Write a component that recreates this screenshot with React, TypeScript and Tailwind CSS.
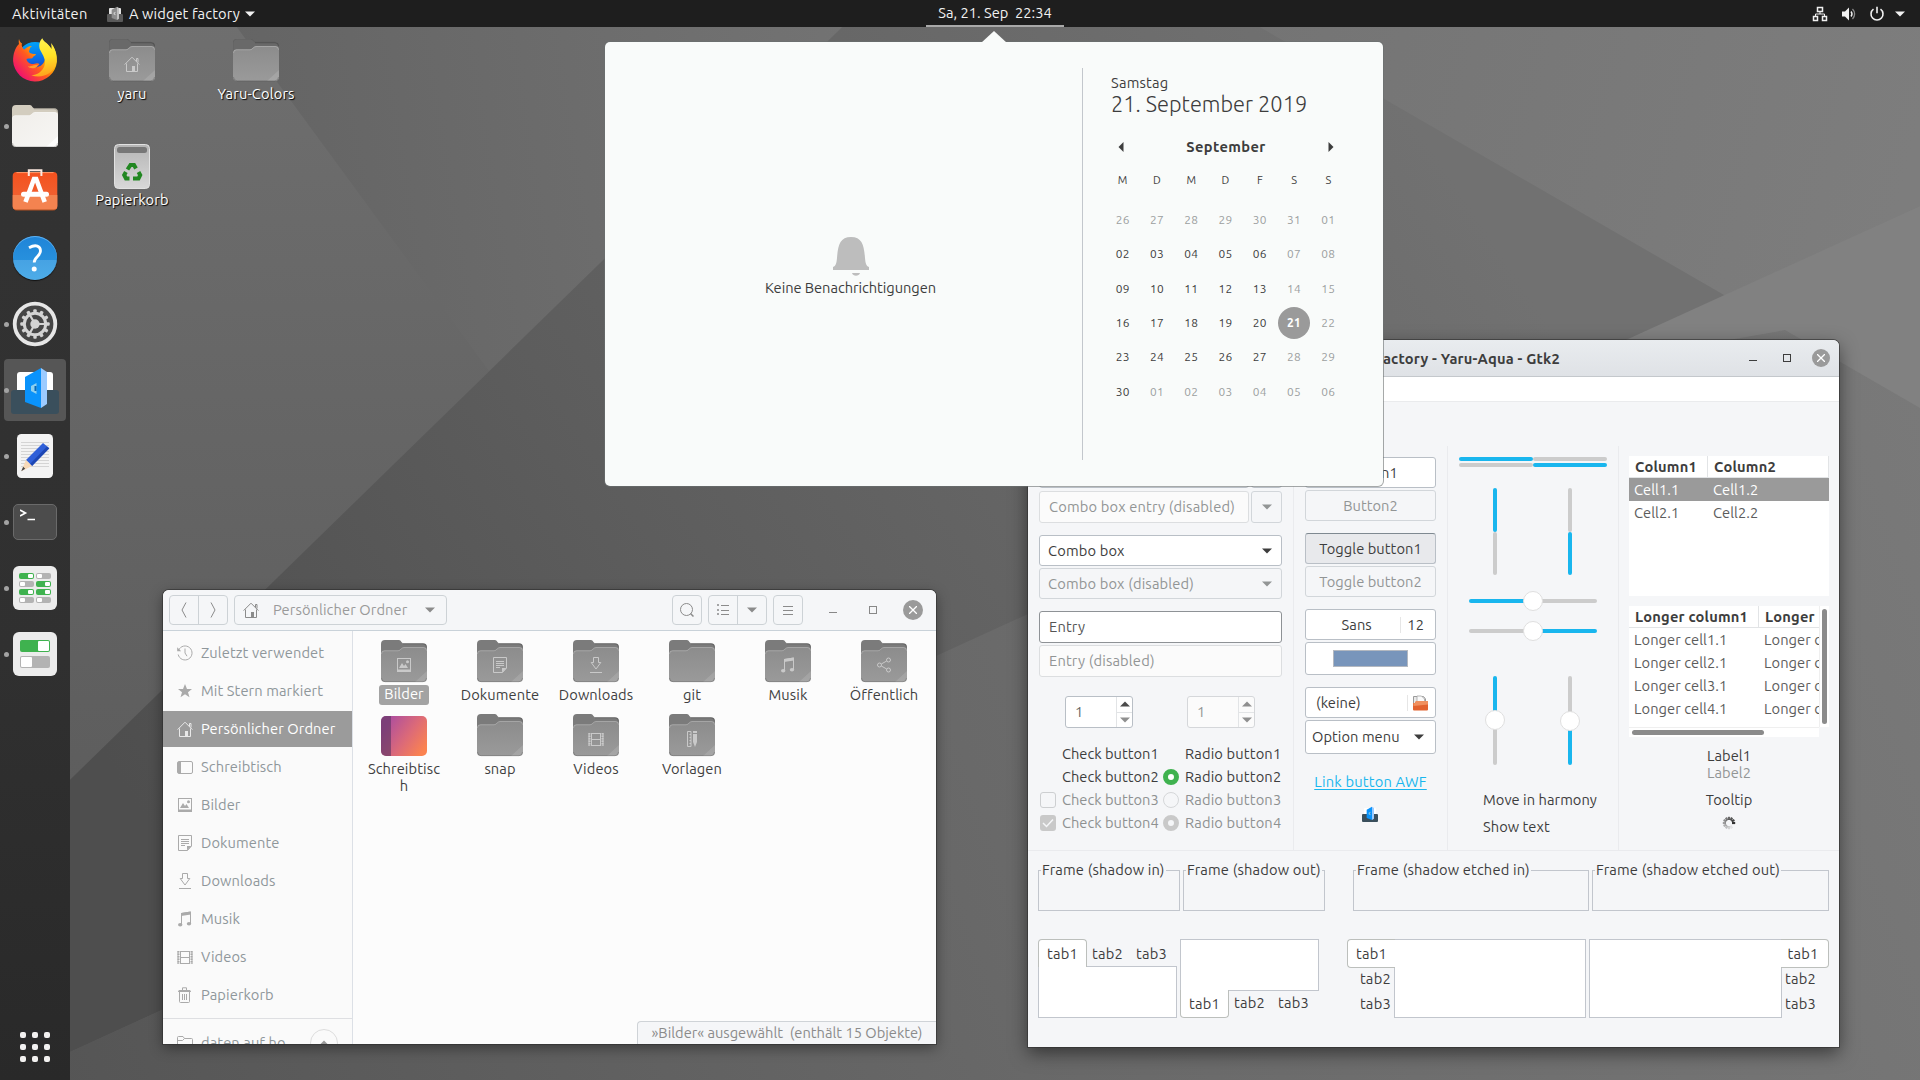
import React from "react";

type Kids = { children?: React.ReactNode };

/* ---------- wallpaper ---------- */

function Wallpaper() {
  return (
    <svg className="absolute inset-0" width="1920" height="1080" viewBox="0 0 1920 1080">
      <defs>
        <linearGradient id="wl" x1="0" y1="0" x2="0" y2="1">
          <stop offset="0" stopColor="#6f6f6f" />
          <stop offset="0.65" stopColor="#5f5f5f" />
          <stop offset="1" stopColor="#585858" />
        </linearGradient>
        <linearGradient id="wm" gradientUnits="userSpaceOnUse" x1="230" y1="100" x2="860" y2="0">
          <stop offset="0" stopColor="#646464" />
          <stop offset="1" stopColor="#737373" />
        </linearGradient>
        <linearGradient id="wd" gradientUnits="userSpaceOnUse" x1="1400" y1="100" x2="200" y2="900">
          <stop offset="0" stopColor="#717171" />
          <stop offset="0.6" stopColor="#5d5d5d" />
          <stop offset="1" stopColor="#4e4e4e" />
        </linearGradient>
        <linearGradient id="wr" gradientUnits="userSpaceOnUse" x1="1250" y1="30" x2="1900" y2="200">
          <stop offset="0" stopColor="#747474" />
          <stop offset="1" stopColor="#7d7d7d" />
        </linearGradient>
        <linearGradient id="wb" gradientUnits="userSpaceOnUse" x1="0" y1="1080" x2="1920" y2="400">
          <stop offset="0" stopColor="#545454" />
          <stop offset="0.5" stopColor="#696969" />
          <stop offset="1" stopColor="#797979" />
        </linearGradient>
      </defs>
      <rect width="1920" height="1080" fill="url(#wl)" />
      <polygon points="217,0 870,0 489,371" fill="url(#wm)" />
      <polygon points="870,0 1920,0 1920,206 0,1084 0,848" fill="url(#wd)" />
      <polygon points="1213,0 1920,0 1920,408" fill="url(#wr)" />
      <polygon points="0,1084 1920,206 1920,1080" fill="url(#wb)" />
      <polygon points="1560,370 1920,206 1920,408 1785,330" fill="#818181" />
    </svg>
  );
}

/* ---------- small glyphs ---------- */

function Tri({ dir = "down", className = "" }: { dir?: "down" | "up" | "left" | "right"; className?: string }) {
  const d = {
    down: "M0 2.5h10L5 7.5z",
    up: "M0 7.5h10L5 2.5z",
    left: "M7.5 0v10L2.5 5z",
    right: "M2.5 0v10l5-5z",
  }[dir];
  return (
    <svg className={className} width="10" height="10" viewBox="0 0 10 10" fill="currentColor">
      <path d={d} />
    </svg>
  );
}

const glyphs: Record<string, React.ReactNode> = {
  recent: (
    <>
      <path d="M1.6 5.2A7 7 0 1 1 1.2 9.5" />
      <path d="M8 3.5V8l2 3.2" />
      <path d="M.2 2.2v4h4z" fill="currentColor" stroke="none" />
    </>
  ),
  star: <path d="M8 1l2 5h5l-4 3.2 1.5 5L8 11.3 3.500 14.200 5 9.200 1 6h5z" fill="currentColor" stroke="none" />,
  home: (
    <>
      <path d="M.6 8.600L8 1.200l7.400 7.400M2.500 7.500v8h11v-8M12.500 5.500v-3h1.500v4" />
      <path d="M8 10h3v5.500H8z" fill="currentColor" stroke="none" />
    </>
  ),
  desktop: (
    <>
      <rect x=".5" y="2.500" width="15" height="12" rx="1.500" />
      <path d="M1 3h3v11H1z" fill="currentColor" stroke="none" />
    </>
  ),
  pictures: (
    <>
      <rect x="1.500" y="1.500" width="13" height="13" />
      <path d="M1 12.500h14V15H1zM3 11l3-5 2 3 1.500-2 2.500 4z" fill="currentColor" stroke="none" />
      <circle cx="11.500" cy="4.700" r="1.500" fill="currentColor" stroke="none" />
    </>
  ),
  documents: (
    <>
      <path d="M1.500.500h13v10.500l-4 4.500h-9z" />
      <path d="M4 4.500h8M4 6.500h8M4 8.500h8M4 10.500h4" />
      <path d="M10 11h4.500L10 15.500z" fill="currentColor" stroke="none" />
    </>
  ),
  downloads: <path d="M5.500.500h5v5h2.300L8 12 3.200 5.500h2.300zM2 15.500h12" />,
  music: (
    <>
      <path d="M4.500 14V2.500L13.500 1v12" />
      <path d="M4 2l10-1.500v3L4 5z" fill="currentColor" stroke="none" />
      <ellipse cx="3.200" cy="13.800" rx="2.200" ry="1.700" fill="currentColor" stroke="none" />
      <ellipse cx="12" cy="12.800" rx="2.200" ry="1.700" fill="currentColor" stroke="none" />
    </>
  ),
  videos: (
    <>
      <path d="M3.500 2v13M12.500 2v13M3.500 2.500h9M3.500 8.500h9M3.500 14.500h9" />
      <path d="M1.500 2v13M14.500 2v13" strokeWidth="2" strokeDasharray="1.500 1" />
      <path d="M1 2v13M15 2v13" strokeWidth="1" />
    </>
  ),
  trash: (
    <>
      <path d="M2.500 5v9.500a1 1 0 0 0 1 1h8a1 1 0 0 0 1-1V5M5.500 7v6M7.500 7v6M9.500 7v6" />
      <path d="M1 5c0-1.500 1-2 2-2h9c1 0 2 .500 2 2z" fill="currentColor" stroke="none" />
      <path d="M5.500 3V.800h4V3" />
    </>
  ),
  folder: <path d="M.5 15V2.500a1 1 0 0 1 1-1h4.500l1.500 2h7a1 1 0 0 1 1 1V15M.5 5.500h5l2-2" />,
  share: (
    <>
      <circle cx="3.500" cy="8" r="2" />
      <circle cx="12.500" cy="3" r="2" />
      <circle cx="12.500" cy="13" r="2" />
      <path d="M5.300 7l5.400-3M5.300 9l5.400 3" />
    </>
  ),
  templates: (
    <>
      <path d="M3.500.500h3.500v15H3.500zM5.500 3.500H7M5.500 6.500H7M5.500 9.500H7M5.500 12.500H7" />
      <path d="M9 3h4v8l-2 5-2-5zM9 0h4v2H9z" fill="currentColor" stroke="none" />
    </>
  ),
};

function Glyph({ name, className = "" }: { name: string; className?: string }) {
  return (
    <svg className={className} width="16" height="16" viewBox="0 0 16 16" fill="none" stroke="currentColor" strokeWidth="1">
      {glyphs[name]}
    </svg>
  );
}

/* ---------- folders ---------- */

function Folder({ glyph, faded, dock }: { glyph?: string; faded?: boolean; dock?: boolean }) {
  const back = dock ? "#d3cdbf" : faded ? "#696969" : "#7b7b7b";
  const fill = dock ? "url(#fDock)" : "url(#fGrey)";
  return (
    <span className="relative block h-[42px] w-[46px] shrink-0">
      <svg width="46" height="43" viewBox="0 0 46 43" className="block">
        <defs>
          <linearGradient id="fGrey" x1="0" y1="0" x2="0" y2="1">
            <stop offset="0" stopColor="#8c8c8c" />
            <stop offset="1" stopColor="#9a9a9a" />
          </linearGradient>
          <linearGradient id="fDock" x1="0" y1="0" x2="1" y2="1">
            <stop offset="0" stopColor="#f0eeea" />
            <stop offset="1" stopColor="#f7f6f4" />
          </linearGradient>
        </defs>
        <path
          d="M0 20V4a4 4 0 0 1 4-4h14c2 0 2.500 3.300 4.500 3.300H42a4 4 0 0 1 4 4V20z"
          fill={back}
          stroke={faded ? "#5f5f5f" : "none"}
          strokeWidth=".7"
        />
        <path d="M22 3.800h20a3.500 3.500 0 0 1 3.500 3.500" stroke="#000" strokeOpacity=".18" fill="none" />
        <path
          d="M0 14a3.700 3.700 0 0 1 3.700-3.700H17c2.500 0 3.500-3.300 6-3.300h19.300A3.700 3.700 0 0 1 46 10.700V38a4 4 0 0 1-4 4H4a4 4 0 0 1-4-4z"
          fill={fill}
        />
        <path
          d="M.5 14a3.200 3.200 0 0 1 3.200-3.200H17c2.500 0 3.500-3.300 6-3.300h19.300A3.200 3.200 0 0 1 45.500 10.700"
          stroke="#fff"
          strokeOpacity=".22"
          fill="none"
        />
        <path d="M34 42L46 31v7a4 4 0 0 1-4 4z" fill="#fff" opacity={dock ? 0.8 : 0.12} />
        <path d="M.5 38a3.800 3.800 0 0 0 3.800 3.800h37.400A3.800 3.800 0 0 0 45.500 38" stroke="#000" strokeOpacity=".18" fill="none" />
      </svg>
      {glyph && <Glyph name={glyph} className="absolute top-[17px] left-[15px] text-[#c9c9c9]" />}
    </span>
  );
}

/* ---------- dock icons ---------- */

function Firefox() {
  return (
    <svg className="mt-px" width="48" height="48" viewBox="0 0 48 48">
      <defs>
        <linearGradient id="ffB" x1=".4" y1="0" x2=".5" y2="1">
          <stop offset="0" stopColor="#00a4f8" />
          <stop offset=".5" stopColor="#0a6be8" />
          <stop offset="1" stopColor="#3a1f8a" />
        </linearGradient>
        <linearGradient id="ffR" x1=".9" y1=".1" x2=".1" y2=".8">
          <stop offset="0" stopColor="#fff44f" />
          <stop offset=".35" stopColor="#ffb000" />
          <stop offset=".6" stopColor="#ff5a1f" />
          <stop offset="1" stopColor="#f0126e" />
        </linearGradient>
        <linearGradient id="ffY" x1=".4" y1="0" x2=".5" y2="1">
          <stop offset="0" stopColor="#fff44f" />
          <stop offset=".5" stopColor="#ffe226" />
          <stop offset="1" stopColor="#ffa01e" />
        </linearGradient>
      </defs>
      <circle cx="24" cy="23" r="18" fill="url(#ffB)" />
      <path
        d="M8 2c-.5 2-.2 4 0 5C4 11 2 17 2.100 24a22 22 0 0 0 43.800 1c.6-8-2-13-5-17 .500 3 .600 5 .200 7-1-4-5-9-7-10 2 8 2 14-.600 19-2 5-7 7-11 6 3 0 5-1 6-3-3-2-5 .500-8 0-3-.500-5-3-5-5 2-1 5 0 6-1 .500-2 3-2 3.500-4-3 0-5 0-7-2 .500-3 1-5 3-6-4 0-6 2-7.500 3.500C12 12 10 9 11 6.500 9.500 5.500 8.500 4 8 2z"
        fill="url(#ffR)"
      />
      <path
        d="M31.300 1.300c-3 3-4 8-2 12 3 6 6 9 4 16-2 5-7 9-13 9 11 4 22-2 24.500-11C47 18 43 9 40 6c.500 2 .700 5 .400 6-1.500-4-7-6-9.100-10.700z"
        fill="url(#ffY)"
      />
      <path d="M17 29c3 1.500 5-2 10-.5-2 3-6 3.500-9 2z" fill="#ff9a2b" />
    </svg>
  );
}

function Software() {
  return (
    <svg width="48" height="48" viewBox="0 0 48 48">
      <defs>
        <linearGradient id="sw" x1="0" y1="0" x2="0" y2="1">
          <stop offset="0" stopColor="#f4511e" />
          <stop offset="1" stopColor="#f0683a" />
        </linearGradient>
      </defs>
      <rect x="1.700" y="4" width="44.600" height="38" rx="4" fill="url(#sw)" />
      <path d="M1.700 27h44.600v11a4 4 0 0 1-4 4H5.700a4 4 0 0 1-4-4z" fill="#f48350" />
      <path d="M5.500 4.600h37" stroke="#ff9b6d" strokeWidth="1" />
      <path d="M3 41.200c.8.700 1.700.8 2.700.8h36.600c1 0 2-.2 2.700-.8" stroke="#b04e20" fill="none" />
      <path d="M17.800 8V2.200h12.600V8" fill="none" stroke="#fde9df" strokeWidth="2" />
      <path d="M14.500 34L23 11h2.200l8.500 23" fill="none" stroke="#fff" strokeWidth="4.600" />
      <path d="M12.500 26.300h23" stroke="#fff" strokeWidth="5" strokeLinecap="round" />
    </svg>
  );
}

function Help() {
  return (
    <span className="flex h-11 w-11 items-center justify-center rounded-full bg-[linear-gradient(#1f84d8_0%,#2790dd_54%,#46a2e3_54%,#4dace8_100%)] shadow-[inset_0_1px_0_#5fb0ee,0_1px_1px_#111]">
      <svg width="16" height="28" viewBox="0 0 16 28">
        <path d="M2 3.800C9-.2 13.500 2.200 13.500 7c0 5-6.300 6-6.300 11.500" fill="none" stroke="#fff" strokeWidth="2.800" />
        <circle cx="7.200" cy="25" r="2.500" fill="#fff" />
      </svg>
    </span>
  );
}

function Settings() {
  const teeth = Array.from({ length: 12 }, (_, i) => i * 30);
  return (
    <svg width="48" height="48" viewBox="0 0 48 48">
      <circle cx="24" cy="24" r="20.300" fill="#454545" stroke="#e6e6e6" strokeWidth="3.800" />
      <circle cx="24" cy="24" r="10.700" fill="none" stroke="#d3d3d3" strokeWidth="3" />
      {teeth.map((a) => (
        <rect key={a} x="22.300" y="9.300" width="3.400" height="4" rx="1" fill="#d3d3d3" transform={`rotate(${a} 24 24)`} />
      ))}
      <circle cx="24" cy="24" r="4.700" fill="#d3d3d3" />
      <path d="M24 24h10M24 24l-5-8.700M24 24l-5 8.700" stroke="#d3d3d3" strokeWidth="2.200" />
    </svg>
  );
}

function Widgets({ size = 48, grey }: { size?: number; grey?: boolean }) {
  return (
    <svg width={size} height={size} viewBox="0 0 48 48">
      <rect x="6" y="6" width="36" height="26" rx="3" fill={grey ? "#e4e4e4" : "#fff"} />
      <rect x="0" y="24" width="48" height="24" rx="3" fill={grey ? "#5a5a5a" : "#3a4f5c"} />
      <path d="M14 11L30 2v40l-16-6z" fill={grey ? "#8d8d8d" : "#0a93fb"} />
      <path d="M30 2l6 4v32l-6 4z" fill={grey ? "#c0c0c0" : "#9ccbff"} />
      <path d="M25.500 17v11l-5.500-3v-5z" fill={grey ? "#dddddd" : "#8fd0ee"} />
      <path d="M23.500 20h2v5h-2z" fill={grey ? "#666" : "#0668b8"} />
    </svg>
  );
}

function Editor() {
  return (
    <svg width="48" height="48" viewBox="0 0 48 48">
      <rect x="6" y="2" width="36" height="44" rx="4.500" fill="#f3f3f3" />
      {[10, 13, 16, 19, 22, 25, 28, 31, 34].map((y) => (
        <path key={y} d={`M10 ${y + 0.5}h28`} stroke="#d4d4d4" />
      ))}
      <path d="M32 11l6 5-17 18-6-6z" fill="#2f5fd8" />
      <path d="M36 14.500l2.300 2L21 34l-2-2z" fill="#1c46b4" />
      <path d="M15 28l6 6-8 4-2.500 1 1-3z" fill="#f7d9b8" />
      <path d="M12.200 34.800l2 2-4 2.400z" fill="#444" />
    </svg>
  );
}

function Terminal() {
  return (
    <span className="flex h-9 w-11 rounded-[5px] border border-[#6a6a6a] bg-[#4c4c4c] pt-1 pl-1.5">
      <svg width="16" height="12" viewBox="0 0 16 12" fill="none" stroke="#fff" strokeWidth="1.600">
        <path d="M0 1l5.500 3L0 7M7.500 10.500H15" />
      </svg>
    </span>
  );
}

function Tweak({ on, w, h }: { on: boolean; w: string; h: string }) {
  return (
    <span className={`flex rounded-[2px] p-px ${w} ${h} ${on ? "justify-end bg-[#3fb24f]" : "justify-start bg-[#b3b3b3]"}`}>
      <span className="h-full w-[40%] rounded-[1px] bg-white" />
    </span>
  );
}

function TweaksGrid() {
  return (
    <span className="grid h-11 w-11 content-center justify-center gap-0.5 rounded-md bg-[#ececec] [grid-template-columns:15px_15px]">
      {[true, false, false, true, true, true, false, false].map((on, i) => (
        <Tweak key={i} on={on} w="w-[15px]" h="h-1.5" />
      ))}
    </span>
  );
}

function TweaksTwo() {
  return (
    <span className="flex h-11 w-11 flex-col items-center justify-center gap-1 rounded-md bg-[#ececec]">
      <Tweak on w="w-[30px]" h="h-3" />
      <Tweak on={false} w="w-[30px]" h="h-3" />
    </span>
  );
}

function Dock() {
  const items: { el: React.ReactNode; dot?: boolean; active?: boolean }[] = [
    { el: <Firefox /> },
    { el: <Folder dock />, dot: true },
    { el: <Software /> },
    { el: <Help /> },
    { el: <Settings />, dot: true },
    { el: <Widgets />, dot: true, active: true },
    { el: <Editor />, dot: true },
    { el: <Terminal />, dot: true },
    { el: <TweaksGrid />, dot: true },
    { el: <TweaksTwo />, dot: true },
  ];
  return (
    <nav className="relative flex w-[70px] flex-col justify-between bg-[linear-gradient(#333333,#303030_60%,#292929)]">
      <div>
        {items.map((it, i) => (
          <div key={i} className="relative flex h-[66px] items-center justify-center">
            {it.active && <span className="absolute inset-x-1 inset-y-0.5 rounded bg-[#565656]" />}
            {it.dot && <span className="absolute left-1 h-[5px] w-[5px] rounded-full bg-[#a3a3a3]" />}
            <span className="relative">{it.el}</span>
          </div>
        ))}
      </div>
      <div className="grid justify-center gap-1.5 pb-[18px] [grid-template-columns:6px_6px_6px]">
        {Array.from({ length: 9 }, (_, i) => (
          <span key={i} className="h-1.5 w-1.5 rounded-[2px] bg-[#f2f1f0]" />
        ))}
      </div>
    </nav>
  );
}

/* ---------- top bar ---------- */

function TopBar() {
  return (
    <header className="relative flex h-[27px] items-center bg-[#1e1e1e] pr-[15px] pl-3 text-[14.667px] text-[#f2f2f2]">
      <span className="w-[95px] tracking-[0.3px]">Aktivitäten</span>
      <Widgets size={16} grey />
      <span className="ml-1.5 tracking-[0.1px]">A widget factory</span>
      <Tri className="ml-[5px]" />
      <div className="absolute left-[926px] flex h-[27px] w-[138px] items-center justify-center border-b-2 border-[#a9a9a9] whitespace-pre">
        Sa, 21. Sep  22:34
      </div>
      <div className="ml-auto flex items-center">
        <svg width="16" height="16" viewBox="0 0 16 16" fill="none" stroke="#f0f0f0">
          <path d="M5.500 1.500h5v4h-5zM1.500 10.500h4v4h-4zM10.500 10.500h4v4h-4z" strokeWidth="1.500" />
          <path d="M8 5.500V8M3.500 10.500V8h9v2.500" />
        </svg>
        <svg className="ml-[13px]" width="16" height="16" viewBox="0 0 16 16" fill="#f2f2f2">
          <path d="M1 5.500h3L8 1.500v13L4 10.500H1z" />
          <path d="M10 5.500a4 4 0 0 1 0 5" fill="none" stroke="#f2f2f2" strokeWidth="1.400" />
          <path d="M11.500 3a7 7 0 0 1 0 10" fill="none" stroke="#8a8a8a" strokeWidth="1.300" />
        </svg>
        <svg className="ml-3" width="16" height="16" viewBox="0 0 16 16" fill="none" stroke="#f2f2f2" strokeWidth="1.600">
          <path d="M4.500 3.200a6 6 0 1 0 7 0M8 .8v6.500" />
        </svg>
        <Tri className="ml-2.5" />
      </div>
    </header>
  );
}

/* ---------- desktop icons ---------- */

function DesktopIcon({ label, pos, children }: Kids & { label: string; pos: string }) {
  return (
    <div className={`absolute flex w-[110px] flex-col items-center text-[14.667px] leading-5 tracking-[0.15px] text-white [text-shadow:1px_1px_1px_#000] ${pos}`}>
      {children}
      <span className="mt-[3px]">{label}</span>
    </div>
  );
}

function TrashCan() {
  return (
    <svg className="-mb-[2px]" width="36" height="45" viewBox="0 0 36 45">
      <defs>
        <linearGradient id="tc" x1="0" y1="0" x2="0" y2="1">
          <stop offset="0" stopColor="#b5b5b5" />
          <stop offset="1" stopColor="#d8d8d8" />
        </linearGradient>
      </defs>
      <rect x=".5" y=".5" width="35" height="44" rx="4" fill="url(#tc)" stroke="#e2e2e2" />
      <rect x="3" y="3" width="30" height="6" rx="2.500" fill="#777" />
      <g fill="none" stroke="#218721" strokeWidth="4">
        <path d="M13.500 25.500l3-4.500h3.500l2 3.500" />
        <path d="M24.500 28l1.700 3-1.700 3.500H19" />
        <path d="M15.500 34.500H12L10.200 31l1.700-3" />
      </g>
    </svg>
  );
}

/* ---------- calendar popup ---------- */

function Calendar() {
  const weeks = [
    ["26", "27", "28", "29", "30", "31", "01"],
    ["02", "03", "04", "05", "06", "07", "08"],
    ["09", "10", "11", "12", "13", "14", "15"],
    ["16", "17", "18", "19", "20", "21", "22"],
    ["23", "24", "25", "26", "27", "28", "29"],
    ["30", "01", "02", "03", "04", "05", "06"],
  ];
  const dim = (r: number, c: number) => r === 0 || c > 4 || (r === 5 && c > 0);
  return (
    <div className="absolute top-[42px] left-[605px] flex h-[444px] w-[778px] rounded-[5px] bg-[#f9fbfa] text-[14.667px] text-[#3d3d3d] shadow-[0_0_0_1px_#6b6f6f99]">
      <svg className="absolute -top-[11px] left-[376px]" width="26" height="12" viewBox="0 0 26 12">
        <path d="M0 12L13 0l13 12z" fill="#f9fbfa" />
      </svg>
      <section className="flex w-[477px] flex-col items-center justify-center pt-[7px] pl-[14px]">
        <svg width="36" height="40" viewBox="0 0 36 40" fill="#bdbdbd">
          <path d="M0 33v-3c3-1 3.500-4 4-9C5 8 7 0 18 0s13 8 14 21c.5 5 1 8 4 9v3zM19 36h8c-1 3.500-7 3.500-8 0z" />
        </svg>
        <span className="mt-px leading-5 tracking-[-0.05px]">Keine Benachrichtigungen</span>
      </section>
      <div className="my-[26px] w-px bg-[#c3c7cc]" />
      <section className="w-[265px] pt-[31px] pl-[28px]">
        <div className="leading-5 tracking-[0.2px]">Samstag</div>
        <div className="text-[21.800px] leading-[22px] font-light">21. September 2019</div>
        <div className="mt-[22px] flex h-5 w-[229px] items-center justify-between pr-1 pl-[5px]">
          <Tri dir="left" />
          <span className="font-bold tracking-[0.4px]">September</span>
          <Tri dir="right" />
        </div>
        <div className="mt-[11.5px] -ml-[5.500px] grid w-[240px] grid-cols-7 text-center text-[11.900px]">
          {["M", "D", "M", "D", "F", "S", "S"].map((d, i) => (
            <span key={i} className="mb-[12px] text-[11px] leading-[22px]">
              {d}
            </span>
          ))}
          {weeks.flatMap((w, r) =>
            w.map((d, c) => {
              const today = r === 3 && c === 5;
              return (
                <span key={`${r}-${c}`} className="flex h-[34.400px] items-center justify-center tracking-[0.3px]">
                  <span
                    className={
                      today
                        ? "flex h-8 w-8 shrink-0 items-center justify-center rounded-full bg-[#9a9a9a] font-bold text-white"
                        : dim(r, c)
                          ? "text-[#9c9f9f]"
                          : ""
                    }
                  >
                    {d}
                  </span>
                </span>
              );
            }),
          )}
        </div>
      </section>
    </div>
  );
}

/* ---------- file manager ---------- */

function HeaderBox({ w, children }: Kids & { w: string }) {
  return <div className={`flex h-[30px] items-stretch rounded border border-[#cdd2d6] text-[#8b8b8b] ${w}`}>{children}</div>;
}

function Files() {
  const places = [
    ["recent", "Zuletzt verwendet"],
    ["star", "Mit Stern markiert"],
    ["home", "Persönlicher Ordner"],
    ["desktop", "Schreibtisch"],
    ["pictures", "Bilder"],
    ["documents", "Dokumente"],
    ["downloads", "Downloads"],
    ["music", "Musik"],
    ["videos", "Videos"],
    ["trash", "Papierkorb"],
  ];
  const folders: [string, string?][] = [
    ["Bilder", "pictures"],
    ["Dokumente", "documents"],
    ["Downloads", "downloads"],
    ["git"],
    ["Musik", "music"],
    ["Öffentlich", "share"],
    ["Schreibtisch"],
    ["snap"],
    ["Videos", "videos"],
    ["Vorlagen", "templates"],
  ];
  return (
    <div className="absolute top-[590px] left-[163px] flex h-[454px] w-[773px] flex-col overflow-hidden rounded-t-[6px] bg-[#fcfcfc] text-[14.667px] tracking-[0.1px] shadow-[0_0_0_1px_#2f2f2f99,0_4px_14px_#00000066]">
      <header className="flex h-[41px] shrink-0 items-center border-b border-[#c9d2d9] bg-[#f5f6f8] pl-1.5">
        <HeaderBox w="w-[59px]">
          <span className="flex flex-1 items-center justify-center border-r border-[#cdd2d6]">
            <svg width="8" height="16" viewBox="0 0 8 16" fill="none" stroke="currentColor">
              <path d="M6 .5L2 8l4 7.500" />
            </svg>
          </span>
          <span className="flex flex-1 items-center justify-center">
            <svg width="8" height="16" viewBox="0 0 8 16" fill="none" stroke="currentColor">
              <path d="M2 .5L6 8l-4 7.500" />
            </svg>
          </span>
        </HeaderBox>
        <div className="ml-1.5">
          <HeaderBox w="w-[213px]">
            <span className="flex flex-1 items-center pr-[11px] pl-2">
              <Glyph name="home" />
              <span className="ml-3.5 text-[#9a9a9a]">Persönlicher Ordner</span>
              <Tri className="ml-auto" />
            </span>
          </HeaderBox>
        </div>
        <div className="ml-[225px] flex gap-1.5">
          <HeaderBox w="w-[30px]">
            <span className="flex flex-1 items-center justify-center">
              <svg width="16" height="16" viewBox="0 0 16 16" fill="none" stroke="currentColor">
                <circle cx="7.500" cy="7.500" r="6" />
                <path d="M11.500 11.500l3 3" strokeWidth="1.500" />
              </svg>
            </span>
          </HeaderBox>
          <HeaderBox w="w-[59px]">
            <span className="flex flex-1 items-center justify-center border-r border-[#cdd2d6]">
              <svg width="14" height="14" viewBox="0 0 14 14" fill="none" stroke="currentColor">
                <path d="M5 2.500h8M5 7.500h8M5 11.500h8M1.500 1.500h1v1h-1zM1.500 6.500h1v1h-1zM1.500 10.500h1v1h-1z" />
              </svg>
            </span>
            <span className="flex flex-1 items-center justify-center">
              <Tri />
            </span>
          </HeaderBox>
          <HeaderBox w="w-[30px]">
            <span className="flex flex-1 flex-col items-center justify-center gap-[3px]">
              <span className="h-px w-2.5 bg-current" />
              <span className="h-px w-2.5 bg-current" />
              <span className="h-px w-2.5 bg-current" />
            </span>
          </HeaderBox>
        </div>
        <div className="ml-[26px] flex items-center text-[#777]">
          <span className="mt-[5px] h-px w-2 bg-[#888]" />
          <span className="ml-8 h-2 w-2 border border-[#888]" />
          <span className="ml-[26px] flex h-5 w-5 items-center justify-center rounded-full bg-[#9a9a9a]">
            <svg width="8" height="8" viewBox="0 0 8 8" stroke="#fff" strokeWidth="1.300">
              <path d="M0 0l8 8M8 0L0 8" />
            </svg>
          </span>
        </div>
      </header>
      <div className="flex min-h-0 flex-1">
        <aside className="flex w-[190px] shrink-0 flex-col overflow-hidden border-r border-[#dce0e6] bg-[#fafafa] pt-1 text-[#8f979b]">
          <div className="flex shrink-0 flex-col gap-0.5">
            {places.map(([g, label]) => (
              <div
                key={label}
                className={
                  g === "home"
                    ? "flex h-9 items-center bg-[#9b9b9b] pl-3.5 text-white"
                    : "flex h-9 items-center pl-3.5"
                }
              >
                <Glyph name={g} className={g === "home" ? "text-[#e8e8e8]" : "text-[#aaaaaa]"} />
                <span className="ml-2 whitespace-nowrap">{label}</span>
              </div>
            ))}
          </div>
          <div className="mt-[5px] flex h-[42px] shrink-0 items-center border-t border-[#dedfe2] pt-1.5 pl-3.5">
            <Glyph name="folder" className="shrink-0 text-[#aaaaaa]" />
            <span className="ml-2 w-[109px] shrink-0 whitespace-nowrap">daten auf ho…</span>
            <span className="flex h-7 w-7 shrink-0 items-center justify-center rounded-full border border-[#dddddd]">
              <Tri dir="up" className="text-[#9a9a9a]" />
            </span>
          </div>
        </aside>
        <main className="relative flex-1 pt-[9px] pl-[3px]">
          <div className="grid w-[576px] grid-cols-6 gap-y-[2px] text-center leading-[17px] text-[#3f3f3f]">
            {folders.map(([name, glyph]) => (
              <div key={name} className="flex h-[72px] flex-col items-center">
                {name === "Schreibtisch" ? (
                  <span className="mt-0.5 block h-10 w-[46px] shrink-0 overflow-hidden rounded-[5px] bg-[linear-gradient(125deg,#b0509c_15%,#dc6a78_55%,#fb8350_90%)]">
                    <span className="block h-full w-2.5 bg-[#5a346099]" />
                  </span>
                ) : (
                  <Folder glyph={glyph} />
                )}
                {name === "Bilder" ? (
                  <span className="mt-[3px] rounded-[3px] bg-[#a3a3a3] px-[5px] pb-0.5 leading-[18px] text-white">{name}</span>
                ) : name === "Schreibtisch" ? (
                  <span className="mt-1">
                    Schreibtisc
                    <br />h
                  </span>
                ) : (
                  <span className="mt-1">{name}</span>
                )}
              </div>
            ))}
          </div>
          <div className="absolute right-0 bottom-0 flex h-[23px] w-[299px] items-center justify-center rounded-tl border-t border-l border-[#cfd3d7] bg-[#f5f6f8] tracking-normal whitespace-pre text-[#8b8b8b]">
            »Bilder« ausgewählt  (enthält 15 Objekte)
          </div>
        </main>
      </div>
    </div>
  );
}

/* ---------- widget factory ---------- */

const on = "border-[#b9bfc6] bg-white text-[#3d3d3d]";
const off = "border-[#d2d6da] bg-[#f5f6f8] text-[#929595]";

function Field({ cls, size, children }: Kids & { cls: string; size: string }) {
  return <div className={`flex items-center rounded-[3px] border ${size} ${cls}`}>{children}</div>;
}

function Spin({ disabled }: { disabled?: boolean }) {
  return (
    <div
      className={`flex h-8 w-[68px] rounded-[3px] border ${disabled ? "border-[#d5d7da] bg-[#fbfbfb] text-[#929595]" : "border-[#b9bfc6] bg-white text-[#666]"}`}
    >
      <span className="flex flex-1 items-center pl-[9px]">1</span>
      <span className="flex w-4 flex-col border-l border-[#e2e4e6]">
        <span className="flex flex-1 items-center justify-center border-b border-[#e2e4e6]">
          <Tri dir="up" className={disabled ? "w-2.5 text-[#8f8f8f]" : "w-2.5 text-[#4a4a4a]"} />
        </span>
        <span className="flex flex-1 items-center justify-center">
          <Tri className="w-2.5 text-[#8f8f8f]" />
        </span>
      </span>
    </div>
  );
}

function Check({ n }: { n: number }) {
  return (
    <div className={`flex h-[23px] w-[123px] items-center ${n > 2 ? "text-[#8e9191]" : ""}`}>
      <span
        className={`mr-1.5 h-4 w-4 shrink-0 rounded-[3px] ${n === 3 ? "border border-[#cdcfd1]" : n === 4 ? "bg-[#c9c9c9]" : ""}`}
      >
        {n === 4 && (
          <svg width="16" height="16" viewBox="0 0 16 16" fill="none" stroke="#f5f6f8" strokeWidth="1.500">
            <path d="M3 8l3.500 3.500L13 4.500" />
          </svg>
        )}
      </span>
      <span className="tracking-normal whitespace-nowrap">Check button{n}</span>
    </div>
  );
}

function Radio({ n }: { n: number }) {
  return (
    <div className={`flex h-[23px] items-center ${n > 2 ? "text-[#8e9191]" : ""}`}>
      <span
        className={`mr-1.5 h-4 w-4 shrink-0 rounded-full ${
          n === 2 ? "border-[5px] border-[#3fb24f] bg-white" : n === 3 ? "border border-[#d5d7d9]" : n === 4 ? "border-[5px] border-[#c9c9c9]" : ""
        }`}
      />
      <span className="tracking-[0.15px] whitespace-nowrap">Radio button{n}</span>
    </div>
  );
}

function HSlider({ rev }: { rev?: boolean }) {
  return (
    <div className="relative mx-auto flex h-5 w-32 items-center">
      <span className={`h-1 flex-1 rounded-full ${rev ? "bg-[#cccccc]" : "bg-[#19b6ee]"}`} />
      <span className={`h-1 flex-1 rounded-full ${rev ? "bg-[#19b6ee]" : "bg-[#cccccc]"}`} />
      <span className="absolute left-[54px] h-5 w-5 rounded-full border border-[#dfdfdf] bg-white" />
    </div>
  );
}

function VBar({ rev, knob, h }: { rev?: boolean; knob?: boolean; h: string }) {
  return (
    <div className={`relative flex w-5 flex-col items-center ${h}`}>
      <span className={`w-1 flex-1 rounded-full ${rev ? "bg-[#cccccc]" : "bg-[#19b6ee]"}`} />
      <span className={`w-1 flex-1 rounded-full ${rev ? "bg-[#19b6ee]" : "bg-[#cccccc]"}`} />
      {knob && <span className={`absolute h-5 w-5 rounded-full border border-[#dfdfdf] bg-white ${rev ? "top-[35px]" : "top-[34px]"}`} />}
    </div>
  );
}

function Frame({ label, w }: { label: string; w: string }) {
  return (
    <fieldset className={`h-[50px] min-w-0 shrink-0 border border-[#c2c6cd] ${w}`}>
      <legend className="ml-0.5 px-px leading-[18px] tracking-[0.17px] whitespace-nowrap">{label}</legend>
    </fieldset>
  );
}

const tabEdge = "border-[#bcbfbc]";

function Factory() {
  return (
    <div className="absolute top-[340px] left-[1028px] flex h-[707px] w-[811px] flex-col overflow-hidden rounded-t-[6px] bg-[#f5f6f8] text-[14.667px] tracking-[0.05px] text-[#3d3d3d] shadow-[0_0_0_1px_#2f2f2f99,0_6px_18px_#00000080]">
      <header className="relative flex h-[37px] shrink-0 items-center justify-center border-b border-[#c4c8cc] bg-[linear-gradient(#e9ecef,#dfe2e6)] font-bold">
        <span className="pt-px pl-[3px] tracking-[0.2px]">A widget factory - Yaru-Aqua - Gtk2</span>
        <div className="absolute right-[9px] flex items-center">
          <span className="mt-1 h-px w-2 bg-[#3d3d3d]" />
          <span className="ml-[26px] h-2 w-2 border border-[#3d3d3d]" />
          <span className="ml-[21px] flex h-[18px] w-[18px] items-center justify-center rounded-full bg-[#9a9a9a]">
            <svg width="8" height="8" viewBox="0 0 8 8" stroke="#fff" strokeWidth="1.300">
              <path d="M0 0l8 8M8 0L0 8" />
            </svg>
          </span>
        </div>
      </header>
      <div className="h-[25px] shrink-0 border-b border-[#eaebed] bg-white" />
      <div className="mt-11 flex h-[405px] shrink-0 border-b border-[#eaebee]">
        {/* combo boxes, entries and buttons */}
        <section className="w-[266px] border-r border-[#eaebee] pt-2.5 pl-[11px]">
          <div className="flex w-[243px] gap-[2px]">
            <Field cls={on} size="h-8 w-[210px]" />
            <Field cls={on} size="h-8 w-[31px]" />
          </div>
          <div className="mt-[3px] flex w-[243px] gap-[2px]">
            <Field cls="border-[#dcdee0] bg-[#fbfbfb] text-[#929595]" size="h-8 w-[210px] pl-[9px]">
              <span className="tracking-[0.18px] whitespace-nowrap">Combo box entry (disabled)</span>
            </Field>
            <Field cls={off} size="h-8 w-[31px] justify-center">
              <Tri />
            </Field>
          </div>
          <Field cls={on} size="mt-3 h-[31px] w-[243px] justify-between pr-[9px] pl-2 tracking-[0.17px]">
            Combo box
            <Tri />
          </Field>
          <Field cls={off} size="mt-0.5 h-[31px] w-[243px] justify-between pr-[9px] pl-2 tracking-[0.17px]">
            Combo box (disabled)
            <Tri />
          </Field>
          <Field cls="border-[#8e9296] bg-white text-[#555]" size="mt-3 h-8 w-[243px] pl-[9px] tracking-[0.17px]">
            Entry
          </Field>
          <Field cls="border-[#dcdee0] bg-[#fbfbfb] text-[#929595]" size="mt-0.5 h-8 w-[243px] pl-[9px] tracking-[0.17px]">
            Entry (disabled)
          </Field>
          <div className="mt-[19px] ml-[26px] flex gap-[54px]">
            <Spin />
            <Spin disabled />
          </div>
          <div className="mt-[14px] ml-px flex">
            <div>
              {[1, 2, 3, 4].map((n) => (
                <Check key={n} n={n} />
              ))}
            </div>
            <div>
              {[1, 2, 3, 4].map((n) => (
                <Radio key={n} n={n} />
              ))}
            </div>
          </div>
        </section>
        <section className="flex w-[154px] flex-col items-start border-r border-[#eaebee] pt-[11px] pl-[11px]">
          <Field cls={on} size="h-[31px] w-[131px] justify-center">
            Button1
          </Field>
          <Field cls={off} size="mt-0.5 h-[31px] w-[131px] justify-center">
            Button2
          </Field>
          <Field cls="border-[#b9bfc6] border-t-[#7f8991] bg-[#e8e9ec]" size="mt-3 h-[31px] w-[131px] justify-center">
            Toggle button1
          </Field>
          <Field cls={off} size="mt-0.5 h-[31px] w-[131px] justify-center">
            Toggle button2
          </Field>
          <Field cls={on} size="mt-3 h-[31px] w-[131px] pr-[11px]">
            <span className="flex-1 pl-[7px] text-center">Sans</span>
            <span className="border-l border-[#e6e6e6] pl-1.5 leading-4">12</span>
          </Field>
          <Field cls={on} size="mt-0.5 h-[33px] w-[131px] justify-center">
            <span className="h-[17px] w-[75px] border border-[#b3b8c0] bg-[#7895bb]" />
          </Field>
          <Field cls={on} size="mt-3 h-[31px] w-[131px] justify-between pr-1.5 pl-2.5">
            (keine)
            <span className="flex h-4 items-center border-l border-[#e6e6e6] pl-1">
              <svg width="17" height="16" viewBox="0 0 17 16">
                <path d="M1.500 12V1.500h10l2 2.500v8z" fill="#e9e9e9" stroke="#9a9a9a" />
                <path d="M5 12V1h4.500l3 3v8z" fill="#fafafa" stroke="#a5a5a5" strokeWidth=".8" />
                <path d="M1 14.500V8h2l1-2h12v8.500a1 1 0 0 1-1 1H2a1 1 0 0 1-1-1z" fill="#e2622f" />
                <path d="M4 6h12v3.500L1.500 11V8H3z" fill="#f0905f" />
              </svg>
            </span>
          </Field>
          <Field cls={on} size="mt-0.5 h-[34px] w-[131px] justify-between pr-[11px] pl-1.5">
            Option menu
            <Tri />
          </Field>
          <div className="mt-[18px] w-[131px] text-center leading-5 tracking-[0.2px] text-[#19b6ee] underline underline-offset-2">Link button AWF</div>
          <div className="mt-[14px] ml-[57px]">
            <Widgets size={16} />
          </div>
        </section>
        <section className="w-[171px] border-r border-[#eaebee] pt-[11px] pl-[11px]">
          <div className="flex h-1 w-[148px]">
            <span className="flex-1 rounded-full bg-[#19b6ee]" />
            <span className="flex-1 rounded-full bg-[#cccccc]" />
          </div>
          <div className="mt-0.5 flex h-1 w-[148px]">
            <span className="flex-1 rounded-full bg-[#cccccc]" />
            <span className="flex-1 rounded-full bg-[#19b6ee]" />
          </div>
          <div className="mt-[21px] flex gap-[55px] pl-[26px]">
            <VBar h="h-[87px]" />
            <VBar h="h-[87px]" rev />
          </div>
          <div className="mt-4 flex w-[148px] flex-col gap-2.5">
            <HSlider />
            <HSlider rev />
          </div>
          <div className="mt-[35px] flex gap-[55px] pl-[26px]">
            <VBar h="h-[89px]" knob />
            <VBar h="h-[89px]" knob rev />
          </div>
          <div className="mt-[25px] pl-6 leading-5">Move in harmony</div>
          <div className="mt-[7px] pl-6 leading-5">Show text</div>
        </section>
        <section className="pt-2.5 pl-2.5">
          <div className="h-[140px] w-[200px] bg-white">
            <div className="flex h-[22px] border-b border-[#e2e4e6] leading-[22px] font-bold tracking-[0.2px]">
              <span className="w-[79px] border-r border-[#e2e4e6] pl-1.5">Column1</span>
              <span className="flex-1 border-r border-[#e2e4e6] pl-1.5">Column2</span>
            </div>
            <div className="flex h-[23px] bg-[#9a9a9a] pl-[5px] leading-[24px] text-white">
              <span className="w-[79px]">Cell1.1</span>
              <span>Cell1.2</span>
            </div>
            <div className="flex h-[23px] pl-[5px] leading-[24px] text-[#5c5c5c]">
              <span className="w-[79px]">Cell2.1</span>
              <span>Cell2.2</span>
            </div>
          </div>
          <div className="mt-2.5 flex h-[121px] w-[200px] bg-white">
            <div className="w-[190px] overflow-hidden whitespace-nowrap">
              <div className="flex h-[22px] border-b border-[#e2e4e6] leading-[22px] font-bold tracking-[0.2px]">
                <span className="w-[130px] shrink-0 border-r border-[#e2e4e6] pl-1.5">Longer column1</span>
                <span className="w-[60px] overflow-hidden pl-1.5">Longer</span>
              </div>
              {[1, 2, 3, 4].map((n) => (
                <div key={n} className="flex h-[23px] pl-[5px] leading-[24px] text-[#5c5c5c]">
                  <span className="w-[130px] shrink-0">Longer cell{n}.1</span>
                  <span className="w-[55px] overflow-hidden">Longer cell{n}.2</span>
                </div>
              ))}
            </div>
            <div className="flex flex-1 justify-center border-l border-[#efefef] py-[3px]">
              <span className="w-[5px] rounded-full bg-[#8b8b8b]" />
            </div>
          </div>
          <div className="flex h-2.5 w-[190px] items-center border-t border-[#efefef] bg-white pl-[3px]">
            <span className="h-[5px] w-[132px] rounded-full bg-[#8b8b8b]" />
          </div>
          <div className="mt-2.5 w-[200px] text-center leading-[17px]">
            <div>Label1</div>
            <div className="text-[#929595]">Label2</div>
            <div className="mt-2.5">Tooltip</div>
            <svg className="mx-auto mt-2" width="14" height="14" viewBox="0 0 14 14">
              {Array.from({ length: 12 }, (_, i) => (
                <path key={i} d="M7 .8v3.200" stroke="#333" strokeWidth="2.200" opacity={((i + 8) % 12) / 11} transform={`rotate(${i * 30} 7 7)`} />
              ))}
            </svg>
          </div>
        </section>
      </div>
      {/* frames */}
      <div className="mt-[10px] flex px-2.5">
        <Frame label="Frame (shadow in)" w="w-[142px]" />
        <Frame label="Frame (shadow out)" w="ml-[3px] w-[142px]" />
        <Frame label="Frame (shadow etched in)" w="ml-7 w-[236px]" />
        <Frame label="Frame (shadow etched out)" w="ml-[3px] w-[237px]" />
      </div>
      {/* notebooks */}
      <div className="mt-[28px] flex h-[79px] px-2.5 tracking-[0.25px]">
        <div className="flex w-[139px] flex-col">
          <div className="flex h-7 items-center">
            <span className={`z-10 flex h-7 w-[49px] items-center justify-center rounded-t border border-b-0 bg-white ${tabEdge}`}>tab1</span>
            <span className="w-[45px] pt-0.5 pl-[5px]">tab2</span>
            <span className="pt-0.5 pl-1">tab3</span>
          </div>
          <div className="-mt-px flex-1 border border-[#c2c6cd] bg-white" />
        </div>
        <div className="ml-[3px] flex w-[139px] flex-col">
          <div className="flex-1 border border-[#c2c6cd] bg-white" />
          <div className="-mt-px flex h-7 items-center">
            <span className={`flex h-7 w-[49px] items-center justify-center rounded-b border border-t-0 bg-white ${tabEdge}`}>tab1</span>
            <span className="w-[45px] pb-0.5 pl-[5px]">tab2</span>
            <span className="pb-0.5 pl-1">tab3</span>
          </div>
        </div>
        <div className="ml-7 flex w-[239px]">
          <div className="z-10 w-[48px] text-right">
            <div className={`flex h-[29px] items-center justify-center rounded-l border border-r-0 bg-white ${tabEdge}`}>tab1</div>
            <div className="h-[25px] pr-1 leading-[22px]">tab2</div>
            <div className="h-[25px] pr-1 leading-[22px]">tab3</div>
          </div>
          <div className="-ml-px flex-1 border border-[#c2c6cd] bg-white" />
        </div>
        <div className="ml-[3px] flex w-[240px]">
          <div className="flex-1 border border-[#c2c6cd] bg-white" />
          <div className="z-10 -ml-px w-[48px]">
            <div className={`flex h-[29px] items-center justify-center rounded-r border border-l-0 bg-white pr-[3px] ${tabEdge}`}>tab1</div>
            <div className="h-[25px] pl-1 leading-[22px]">tab2</div>
            <div className="h-[25px] pl-1 leading-[22px]">tab3</div>
          </div>
        </div>
      </div>
    </div>
  );
}

export default function App() {
  return (
    <div className="relative h-[1080px] w-[1920px] overflow-hidden font-['Ubuntu','Noto_Sans',sans-serif]">
      <Wallpaper />
      <div className="relative flex h-full flex-col">
        <TopBar />
        <div className="flex min-h-0 flex-1">
          <Dock />
        </div>
      </div>
      <DesktopIcon label="yaru" pos="top-[39px] left-[77px]">
        <Folder faded glyph="home" />
      </DesktopIcon>
      <DesktopIcon label="Yaru-Colors" pos="top-[39px] left-[201px]">
        <Folder faded />
      </DesktopIcon>
      <DesktopIcon label="Papierkorb" pos="top-[144px] left-[77px]">
        <TrashCan />
      </DesktopIcon>
      <Files />
      <Factory />
      <Calendar />
    </div>
  );
}
